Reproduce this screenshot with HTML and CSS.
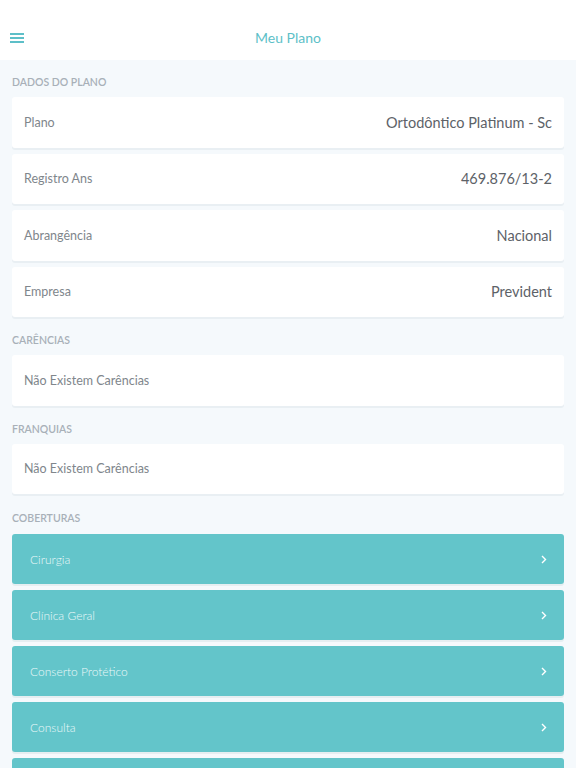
FILE: index.html
```html
<!DOCTYPE html>
<html lang="pt">
<head>
    <meta charset="UTF-8">
    <meta name="viewport" content="width=device-width, initial-scale=1.0">
    <title>Meu Plano</title>
    <link rel="stylesheet" href="styles.css">
</head>
<body>
    <header class="top-bar">
        <button class="menu-button" aria-label="Menu">
            <svg width="14" height="10" viewBox="0 0 14 10">
                <rect x="0" y="0" width="14" height="2" fill="#5dbfc8"/>
                <rect x="0" y="4" width="14" height="2" fill="#5dbfc8"/>
                <rect x="0" y="8" width="14" height="2" fill="#5dbfc8"/>
            </svg>
        </button>
        <div class="title">Meu Plano</div>
    </header>

    <main class="content">
        <div class="section-title">Dados do Plano</div>
        <div class="card row">
            <span class="label">Plano</span>
            <span class="value">Ortodôntico Platinum - Sc</span>
        </div>
        <div class="card row">
            <span class="label">Registro Ans</span>
            <span class="value">469.876/13-2</span>
        </div>
        <div class="card row">
            <span class="label">Abrangência</span>
            <span class="value">Nacional</span>
        </div>
        <div class="card row">
            <span class="label">Empresa</span>
            <span class="value">Prevident</span>
        </div>

        <div class="section-title">Carências</div>
        <div class="card row">
            <span class="label">Não Existem Carências</span>
        </div>

        <div class="section-title">Franquias</div>
        <div class="card row">
            <span class="label">Não Existem Carências</span>
        </div>

        <div class="section-title covers-title">Coberturas</div>
        <div class="cover">
            <span>Cirurgia</span>
            <svg class="chevron" width="6" height="9" viewBox="0 0 6 9"><path d="M1 1 L4.5 4.5 L1 8" fill="none" stroke="#fff" stroke-width="1.4"/></svg>
        </div>
        <div class="cover">
            <span>Clínica Geral</span>
            <svg class="chevron" width="6" height="9" viewBox="0 0 6 9"><path d="M1 1 L4.5 4.5 L1 8" fill="none" stroke="#fff" stroke-width="1.4"/></svg>
        </div>
        <div class="cover">
            <span>Conserto Protético</span>
            <svg class="chevron" width="6" height="9" viewBox="0 0 6 9"><path d="M1 1 L4.5 4.5 L1 8" fill="none" stroke="#fff" stroke-width="1.4"/></svg>
        </div>
        <div class="cover">
            <span>Consulta</span>
            <svg class="chevron" width="6" height="9" viewBox="0 0 6 9"><path d="M1 1 L4.5 4.5 L1 8" fill="none" stroke="#fff" stroke-width="1.4"/></svg>
        </div>
        <div class="cover">
            <span>Dentística</span>
            <svg class="chevron" width="6" height="9" viewBox="0 0 6 9"><path d="M1 1 L4.5 4.5 L1 8" fill="none" stroke="#fff" stroke-width="1.4"/></svg>
        </div>
    </main>
</body>
</html>
```

FILE: styles.css
```css
/* Geral */
body {
    margin: 0;
    font-family: 'Lato', 'Open Sans', sans-serif;
    background-color: #f5f9fc;
    overflow: hidden;
}

/* Barra superior */
.top-bar {
    height: 60px;
    background-color: #fff;
    display: flex;
    align-items: center;
    justify-content: center;
    position: relative;
}

.menu-button {
    position: absolute;
    left: 10px;
    top: 33px;
    padding: 0;
    border: none;
    background: none;
    display: flex;
}

.title {
    color: #5dbfc8;
    font-size: 14px;
    margin-top: 14px;
}

/* Conteúdo */
.content {
    padding: 5px 12px 0 12px;
}

.section-title {
    color: #a8b0b8;
    font-size: 10.5px;
    font-weight: 600;
    text-transform: uppercase;
    padding: 11px 0 8px 0;
    line-height: 13px;
}

.covers-title {
    padding: 12px 0 9px 0;
}

.card {
    background-color: #fff;
    border-radius: 3px;
    box-shadow: 0 2px 0 #e9eff3;
    margin-bottom: 6px;
}

.row {
    height: 50.5px;
    display: flex;
    align-items: center;
    justify-content: space-between;
    padding: 0 12px;
}

.label {
    color: #80868c;
    font-size: 12.5px;
}

.value {
    color: #5d6268;
    font-size: 14.5px;
}

/* Coberturas */
.cover {
    height: 50px;
    background-color: #63c5ca;
    border-radius: 3px;
    box-shadow: 0 2px 0 #e5eef1;
    margin-bottom: 6px;
    display: flex;
    align-items: center;
    justify-content: space-between;
    padding: 0 17px 0 18px;
    color: #eaf8f9;
    font-size: 12px;
    font-weight: 300;
}
```
